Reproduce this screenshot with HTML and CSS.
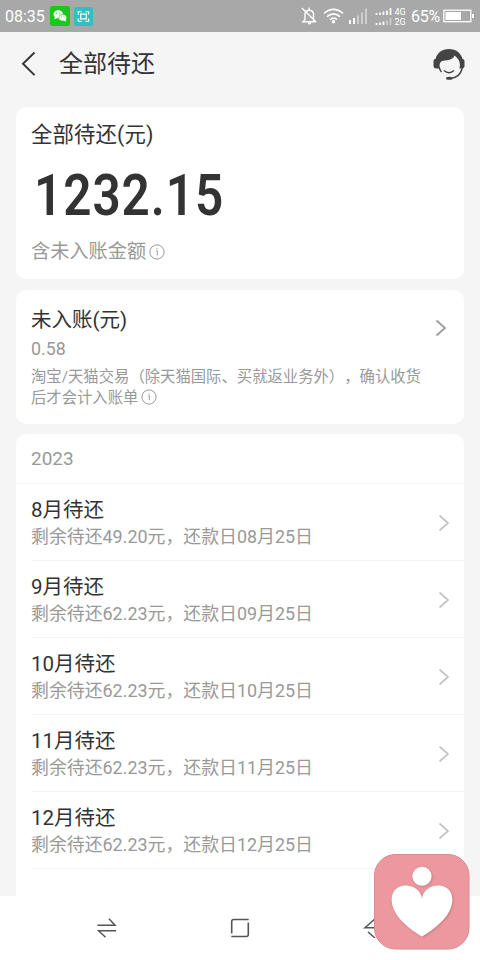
FILE: index.html
```html
<!DOCTYPE html>
<html lang="zh-CN">
<head>
<meta charset="utf-8">
<title>全部待还</title>
<link rel="stylesheet" href="styles.css">
</head>
<body>
<svg class="defs" width="0" height="0">
  <symbol id="chevron" viewBox="0 0 12 18"><path d="M1.500 1.500 10 9l-8.500 7.500" fill="none" stroke="currentColor" stroke-width="1.700"/></symbol>
  <symbol id="info" viewBox="0 0 16 16"><circle cx="8" cy="8" r="7.100" fill="none" stroke="currentColor"/><path d="M7.100 6.800H8.300V11.300M8 4.300v1.200" fill="none" stroke="currentColor"/></symbol>
</svg>
<div class="phone">
  <div class="status">
    <span class="time">08:35</span>
    <svg class="app-icon" viewBox="0 0 20 20"><rect width="20" height="20" rx="2" fill="#1cc71c"/><ellipse cx="8.200" cy="8.300" rx="4.700" ry="4" fill="#fff"/><path d="m5 11-.6 2.500 2.600-1.500" fill="#fff"/><ellipse cx="12.700" cy="11.800" rx="4" ry="3.300" fill="#fff" stroke="#1cc71c" stroke-width=".6"/><path d="m14 14.500 2 1.500-.4-2.500" fill="#fff"/><g fill="#1cc71c"><circle cx="6.700" cy="7.200" r=".6"/><circle cx="9.800" cy="7.200" r=".6"/><circle cx="11.500" cy="11" r=".5"/><circle cx="14" cy="11" r=".5"/></g></svg>
    <svg class="app-icon second" viewBox="0 0 20 20"><rect width="20" height="20" rx="3" fill="#32bfc0"/><g fill="none" stroke="#fff" stroke-width="1.300"><path d="M4.500 8V5H8M12 5h3.500v3M15.500 12v3H12M8 15H4.500v-3"/><rect x="7" y="7.500" width="6" height="5"/></g></svg>
    <svg class="status-icons" viewBox="0 0 118 24">
      <g fill="none" stroke="#fff" stroke-width="1.400"><path d="M5 15.800V9.500a4.400 4.400 0 0 1 8.500 0v6.300l1.500 2H3l2-2M2 4l14 14M8 19.500h3M9.200 3.500v2"/></g>
      <g fill="none" stroke="#fff" stroke-width="1.700"><path d="M24 9.300q9.500-8 19 0M27 12.700q6.500-5.500 13 0M30 15.700q3.500-3 7 0"/></g><circle cx="33.500" cy="17.700" r="1.700" fill="#fff"/>
      <path d="M50 16v4M54 14v6" stroke="#fff" stroke-width="2"/><path d="M58 11.500V20M62 8.500V20M66 4.500V20" stroke="#cecece" stroke-width="2"/>
      <path d="M76.500 9v2M80 8.500V11M83.500 7.500V11M87 6.500V11M90.500 4V11M76.500 19v2M80 18.500V21M83.500 17.500V21" stroke="#fff" stroke-width="1.700"/><path d="M87 16.500V21M90.500 14V21" stroke="#cecece" stroke-width="1.700"/>
      <g class="net"><text x="94.500" y="11.300">4G</text><text x="94.500" y="20.600">2G</text></g>
    </svg>
    <span class="percent">65%</span>
    <svg class="battery" viewBox="0 0 32 14"><rect x=".8" y="1.200" width="27" height="11.500" fill="none" stroke="#fff" stroke-width="1.300"/><path d="M2.500 3h15.500v8H2.500zM29 5h2v4h-2z" fill="#fff"/></svg>
  </div>

  <header class="header">
    <svg class="back" viewBox="0 0 15 26"><path d="M13.500 1.500 2 12.800l11.500 11.300" fill="none" stroke="#333" stroke-width="1.900"/></svg>
    <h1>全部待还</h1>
    <svg class="service" viewBox="0 0 32 32">
      <path d="M2.500 11C4 5 9 1 16 1s12 4 13.500 10c1.700.3 2 1 2 2.500v4.500c0 1.500-1 2.500-3 2.500h-2c1-5 .2-8.500-2.600-10.800-1-.8-1.700-1.400-2.100-2.200-2 4-6 5-11.800 5.200-3.500 1-3.800 4-3 7.800H4.500C2 20.500.5 20 .5 18v-4.500c0-1.500.3-2.200 2-2.500Z" fill="#444"/>
      <path d="M11 22.500q5 4.500 10 0" fill="none" stroke="#444" stroke-width="1.500"/>
      <path d="M6 19q1 3.500 2.500 5M29.300 20c-1.500 6-5.500 10-12 10.500" fill="none" stroke="#444" stroke-width="1.500"/><ellipse cx="16.300" cy="30.200" rx="3.300" ry="1.500" fill="#444"/>
    </svg>
  </header>

  <main class="content">
    <section class="card total">
      <h2>全部待还(元)</h2>
      <div class="amount">1232.15</div>
      <p>含未入账金额<svg class="info"><use href="#info"/></svg></p>
    </section>

    <section class="card pending">
      <div class="pending-text">
        <h2>未入账(元)</h2>
        <div class="value">0.58</div>
        <p>淘宝/天猫交易（除天猫国际、买就返业务外），确认收货<br>后才会计入账单<svg class="info"><use href="#info"/></svg></p>
      </div>
      <svg class="chevron dark"><use href="#chevron"/></svg>
    </section>

    <section class="card bills">
      <div class="year">2023</div>
      <ul>
        <li><div><h3>8月待还</h3><p>剩余待还49.20元，还款日08月25日</p></div><svg class="chevron"><use href="#chevron"/></svg></li>
        <li><div><h3>9月待还</h3><p>剩余待还62.23元，还款日09月25日</p></div><svg class="chevron"><use href="#chevron"/></svg></li>
        <li><div><h3>10月待还</h3><p>剩余待还62.23元，还款日10月25日</p></div><svg class="chevron"><use href="#chevron"/></svg></li>
        <li><div><h3>11月待还</h3><p>剩余待还62.23元，还款日11月25日</p></div><svg class="chevron"><use href="#chevron"/></svg></li>
        <li><div><h3>12月待还</h3><p>剩余待还62.23元，还款日12月25日</p></div><svg class="chevron"><use href="#chevron"/></svg></li>
      </ul>
    </section>
  </main>

  <nav class="navbar">
    <svg viewBox="0 0 20 20"><path d="M.5 7.300h17.500L12 .8M19 12.700H1.500l7 6.500" fill="none" stroke="#555" stroke-width="1.500"/></svg>
    <svg viewBox="0 0 20 20"><path d="M1.700 15.500V3.500q0-2 2-2h15M18.300 4.500v12q0 2-2 2h-15" fill="none" stroke="#555" stroke-width="1.600"/></svg>
    <svg viewBox="0 0 20 20"><path d="M13 0 2 9.700H18M5 14l7 6" fill="none" stroke="#555" stroke-width="1.500"/></svg>
  </nav>

  <svg class="floating" viewBox="0 0 98 98">
    <defs><filter id="shade" x="-10%" y="-10%" width="125%" height="125%"><feDropShadow dx=".7" dy=".7" stdDeviation="1" flood-color="#854d53" flood-opacity=".5"/></filter></defs>
    <rect x="1.500" y="1.500" width="94.500" height="94.500" rx="21" fill="#ed989e" stroke="#d98a90"/>
    <g fill="#fff" filter="url(#shade)"><circle cx="49" cy="23.200" r="9.500"/><path d="M49 83.500C39 77.500 18.700 64 18.700 46.500c0-8.500 6-14 13.500-14 9.500 0 16.300 6 16.800 13.500.5-7.500 7.300-13.500 16.800-13.500 7.500 0 13.500 5.500 13.500 14C79.300 64 59 77.500 49 83.500Z"/></g>
  </svg>
</div>
</body>
</html>
```
FILE: styles.css
```css
* { box-sizing: border-box; }
body, h1, h2, h3, p, ul { margin: 0; padding: 0; font-weight: 400; }
body { background: #f5f5f5; color: #333; font-family: Roboto, "Noto Sans CJK SC", sans-serif; text-spacing-trim: space-all; }
svg { display: block; flex: none; }
.defs { position: absolute; }
.phone { position: relative; width: 480px; height: 960px; overflow: hidden; display: flex; flex-direction: column; }

.status { height: 32px; flex: none; display: flex; align-items: center; padding-left: 5px; background: #a8a8a8; color: #fff; }
.status > * { flex: none; }
.time { width: 45px; font-size: 16px; line-height: 32px; padding-top: 1px; }
.app-icon { width: 20px; height: 20px; }
.app-icon.second { width: 19px; height: 19px; margin-left: 4px; }
.status-icons { width: 118px; height: 24px; margin-left: 207px; }
.net { font-size: 9px; fill: #fff; }
.percent { width: 30px; margin-left: -7px; font-size: 16px; line-height: 32px; padding-top: 2px; letter-spacing: -.3px; }
.battery { width: 32px; height: 14px; margin-left: 2px; }

.header { height: 75px; flex: none; display: flex; align-items: center; padding: 0 15px 11px 21px; }
.back { width: 15px; height: 26px; }
h1 { margin-left: 23px; font-size: 24px; line-height: 36px; }
.service { width: 32px; height: 32px; margin-left: auto; }

.content { height: 789px; flex: none; padding: 0 16px; display: flex; flex-direction: column; gap: 11px; }
.card { flex: none; background: #fff; border-radius: 10px; padding-left: 15px; }
.total { height: 172px; padding-top: 12px; }
.total h2 { font-size: 21.4px; line-height: 32px; letter-spacing: .1px; }
.amount { margin: 12px 0 0 3px; font-size: 57.5px; font-weight: 600; line-height: 66px; letter-spacing: 1.1px; transform: scaleX(.86); transform-origin: 0 50%; }
.total p { display: flex; align-items: center; margin-top: 8px; font-size: 19.2px; line-height: 30px; color: #999; }
.info { width: 16px; height: 16px; margin: 0 0 0 3px; }

.pending { height: 134px; display: flex; justify-content: space-between; padding-top: 15px; padding-right: 17px; }
.pending h2 { font-size: 20.5px; line-height: 30px; }
.value { margin-top: 2px; font-size: 17.8px; line-height: 24px; color: #999; }
.pending p { margin-top: 6px; font-size: 15.35px; line-height: 21px; white-space: nowrap; color: #999; }
.pending p .info { display: inline-block; vertical-align: -2px; margin-top: 0; }
.chevron { width: 12px; height: 18px; color: #c4c4c4; }
.chevron.dark { margin-top: 14px; color: #999; }

.bills { height: 462px; border-radius: 10px 10px 0 0; margin-top: -1px; }
.year { height: 50px; margin-left: -15px; padding-left: 15px; font-size: 19px; line-height: 50px; color: #999; border-bottom: 1px solid #f3f3f3; }
li { height: 77.1px; display: flex; align-items: center; justify-content: space-between; padding-right: 14px; border-bottom: 1px solid #f3f3f3; }
h3 { font-size: 20.5px; line-height: 28px; }
li p { font-size: 17.9px; line-height: 25px; color: #999; }
li .chevron { margin-top: 2px; }

.navbar { height: 64px; flex: none; background: #fff; display: flex; justify-content: space-between; align-items: center; padding: 0 97px; }
.navbar svg { width: 20px; height: 20px; }
.floating { position: absolute; left: 373px; top: 853px; width: 98px; height: 98px; }
```
